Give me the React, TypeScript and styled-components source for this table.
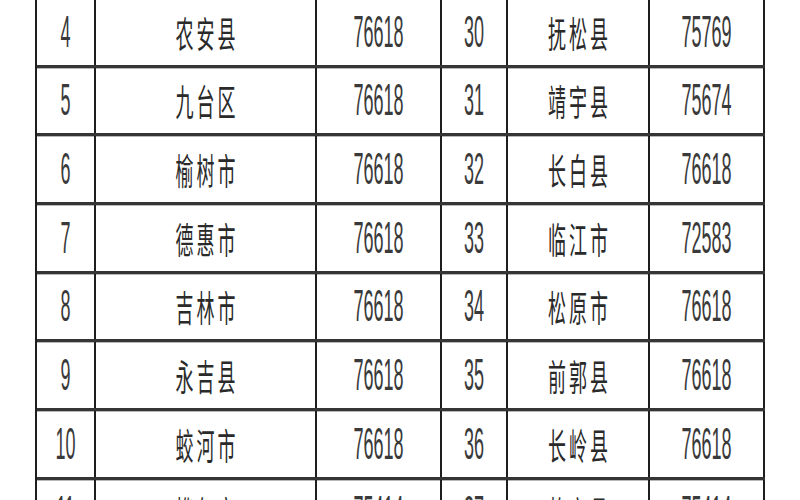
import React from 'react';
import styled, { createGlobalStyle } from 'styled-components';

const GlobalStyle = createGlobalStyle`
  html, body {
    margin: 0;
    padding: 0;
    background: #ffffff;
    overflow: hidden;
  }
  body {
    width: 800px;
    height: 500px;
  }
`;

type Row = {
  no: string;
  name: string;
  amount: string;
  no2: string;
  name2: string;
  amount2: string;
};

const rows: Row[] = [
  { no: '4', name: '农安县', amount: '76618', no2: '30', name2: '抚松县', amount2: '75769' },
  { no: '5', name: '九台区', amount: '76618', no2: '31', name2: '靖宇县', amount2: '75674' },
  { no: '6', name: '榆树市', amount: '76618', no2: '32', name2: '长白县', amount2: '76618' },
  { no: '7', name: '德惠市', amount: '76618', no2: '33', name2: '临江市', amount2: '72583' },
  { no: '8', name: '吉林市', amount: '76618', no2: '34', name2: '松原市', amount2: '76618' },
  { no: '9', name: '永吉县', amount: '76618', no2: '35', name2: '前郭县', amount2: '76618' },
  { no: '10', name: '蛟河市', amount: '76618', no2: '36', name2: '长岭县', amount2: '76618' },
  { no: '11', name: '桦甸市', amount: '75414', no2: '37', name2: '乾安县', amount2: '75414' },
];

const Page = styled.div`
  width: 800px;
  height: 500px;
  padding-left: 35px;
  box-sizing: border-box;
`;

const Table = styled.div`
  width: 730px;
  margin-top: -4px;
  border-left: 2px solid #1e1e1e;
  border-top: 3px solid #3a3a3a;
  box-sizing: border-box;
`;

const TableRow = styled.div`
  display: grid;
  grid-template-columns: 59px 221px 125px 66px 142px 115px;
  height: 68.67px;
  box-sizing: border-box;
  border-bottom: 3px solid #353535;
  box-shadow: 0 1px 0 #b8b8b8;
`;

const Cell = styled.div`
  display: flex;
  align-items: center;
  justify-content: center;
  border-right: 2px solid #1e1e1e;
  box-sizing: border-box;
  overflow: hidden;
`;

const Num = styled.span`
  display: inline-block;
  font-family: 'Liberation Sans', Arial, sans-serif;
  font-size: 18px;
  line-height: 1;
  color: #3a3a3a;
  transform: scale(1, 2.45);
`;

const Name = styled.span`
  display: inline-block;
  font-family: 'Noto Sans CJK SC', 'Noto Sans', sans-serif;
  font-weight: 400;
  font-size: 18px;
  letter-spacing: 3px;
  margin-right: -3px;
  line-height: 1;
  color: #2a2a2a;
  transform: scale(1, 2.05);
`;

export default function App() {
  return (
    <>
      <GlobalStyle />
      <Page>
        <Table>
          {rows.map((r) => (
            <TableRow key={r.no}>
              <Cell><Num>{r.no}</Num></Cell>
              <Cell><Name>{r.name}</Name></Cell>
              <Cell><Num>{r.amount}</Num></Cell>
              <Cell><Num>{r.no2}</Num></Cell>
              <Cell><Name>{r.name2}</Name></Cell>
              <Cell><Num>{r.amount2}</Num></Cell>
            </TableRow>
          ))}
        </Table>
      </Page>
    </>
  );
}
